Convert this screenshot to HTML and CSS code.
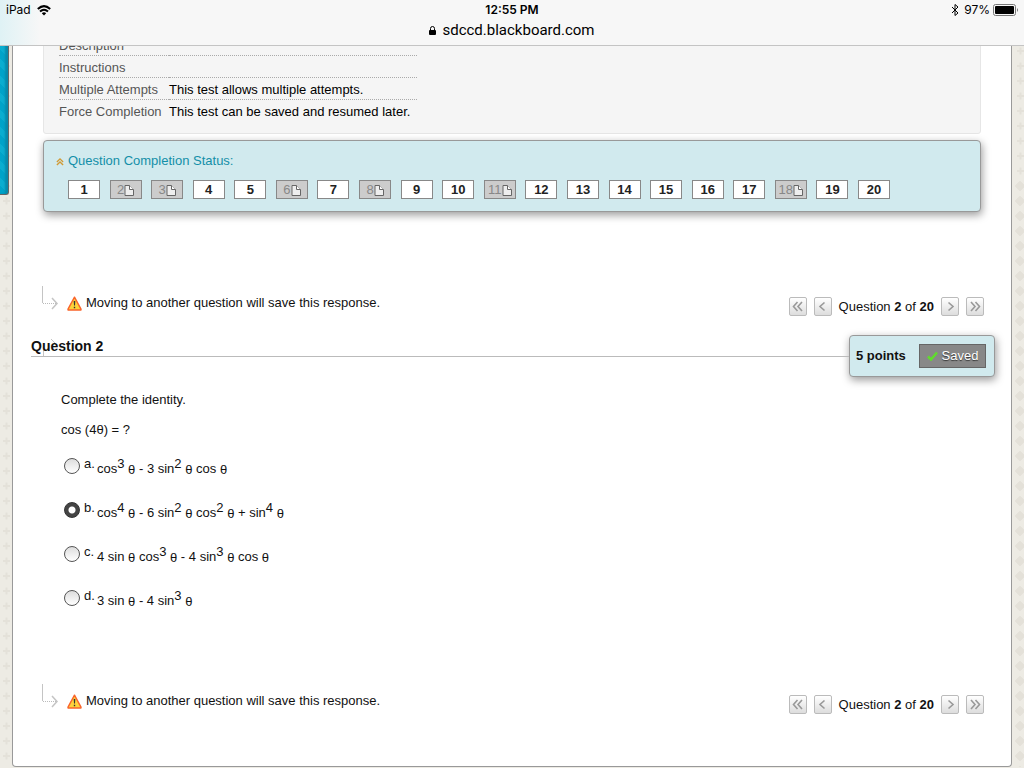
FILE: index.html
```html
<!DOCTYPE html>
<html lang="en">
    <head>
        <meta charset="utf-8">
        <title>Take Test</title>
        <meta name="viewport" content="width=device-width, initial-scale=1.0">
        <link rel="stylesheet" href="styles.css">
    </head>
    <body>
        <svg class="defs" aria-hidden="true">
            <symbol id="page-icon" viewBox="0 0 10 11"><path d="M1 .5h4.500l4 4v6H1z" fill="#eee" stroke="#666"/><path d="M5.500.5v4h4" fill="#fff" stroke="#666"/></symbol>
            <symbol id="arrow" viewBox="0 0 17 24"><path d="M.5 0v17" fill="none" stroke="#c4c4c4"/><path d="M1 17.500h13" fill="none" stroke="#bbb" stroke-dasharray="1 1"/><path d="M10 12l5 5.500-5 5.500" fill="none" stroke="#c4c4c4" stroke-width="1.500"/></symbol>
            <symbol id="warning" viewBox="0 0 15 15"><path d="M7.500 1.200L14 13.200Q14.200 14 13.500 14h-12Q.8 14 1 13.200z" fill="#fdd23a" stroke="#f9642b" stroke-width="1.400" stroke-linejoin="round"/><path d="M6.700 5h1.600l-.3 4.500h-1zM6.800 10.800h1.400v1.500H6.800z" fill="#333"/></symbol>
            <symbol id="first" viewBox="0 0 18 19"><path d="M8.500 5l-4 4.500 4 4.500M13 5L9 9.500l4 4.500" fill="none" stroke="#999" stroke-width="1.600"/></symbol>
            <symbol id="prev" viewBox="0 0 18 19"><path d="M10.500 5.500l-4.500 4 4.500 4" fill="none" stroke="#999" stroke-width="1.600"/></symbol>
            <pattern id="crosses" width="12" height="15" y="10" patternUnits="userSpaceOnUse"><path d="M3 8h7M6.500 4.500v7" stroke="#e4e1d9" stroke-width="2"/></pattern>
            <pattern id="dots" width="12" height="15" y="10" patternUnits="userSpaceOnUse"><path d="M6 4l4 4-4 4-4-4z" stroke="#e4e1d9" stroke-width="2" stroke-linejoin="round" fill="#e4e1d9"/></pattern>
        </svg>

        <header class="browser">
            <div class="status">
                <span class="left">iPad
                    <svg width="14" height="11" viewBox="0 0 14 11"><path d="M.8 4Q7-1.800 13.200 4M3 6.500q4-3.600 8 0" fill="none" stroke="#000" stroke-width="2"/><path d="M4.800 8.200q2.200-1.800 4.400 0L7 10.500z"/></svg>
                </span>
                <span class="time">12:55 PM</span>
                <span class="right">
                    <svg width="8" height="12" viewBox="0 0 8 12"><path d="M1 3l6 6-3 2.500V.5L7 3 1 9" fill="none" stroke="#000"/></svg>
                    97%
                    <svg class="battery" width="25" height="12" viewBox="0 0 25 12"><rect x=".5" y=".5" width="22" height="11" rx="2" fill="none" stroke="#777"/><rect x="2" y="2" width="19" height="8" rx="1"/><path d="M24 4q2 2 0 4z" fill="#777"/></svg>
                </span>
            </div>
            <div class="address">
                <svg width="7" height="9" viewBox="0 0 7 9"><path d="M1.500 4V2.500q0-2 2-2t2 2V4" fill="none" stroke="#000"/><rect y="4" width="7" height="5" rx="1"/></svg>
                sdccd.blackboard.com
            </div>
        </header>

        <div class="site">
            <svg class="texture texture-left" aria-hidden="true"><rect width="12" height="100%" fill="url(#crosses)"/></svg>
            <svg class="texture texture-right" aria-hidden="true"><rect width="12" height="145" fill="url(#crosses)"/><rect y="145" width="12" height="100%" fill="url(#dots)"/></svg>
            <div class="course-tab"></div>
            <main class="page">
                <table class="details">
                    <tr><th scope="row">Description</th><td></td></tr>
                    <tr><th scope="row">Instructions</th><td></td></tr>
                    <tr><th scope="row">Multiple Attempts</th><td>This test allows multiple attempts.</td></tr>
                    <tr><th scope="row">Force Completion</th><td>This test can be saved and resumed later.</td></tr>
                </table>

                <section class="completion">
                    <a class="toggle" href="#questions">
                        <svg width="8" height="9" viewBox="0 0 9 9"><path d="M1 5l3.500-3.500L8 5M1 8.500L4.500 5 8 8.500" fill="none" stroke="#d09a35" stroke-width="1.500"/></svg>
                        Question Completion Status:
                    </a>
                    <div class="questions" id="questions">
                        <button type="button">1</button>
                        <button type="button" class="saved">2<svg><use href="#page-icon"/></svg></button>
                        <button type="button" class="saved">3<svg><use href="#page-icon"/></svg></button>
                        <button type="button">4</button>
                        <button type="button">5</button>
                        <button type="button" class="saved">6<svg><use href="#page-icon"/></svg></button>
                        <button type="button">7</button>
                        <button type="button" class="saved">8<svg><use href="#page-icon"/></svg></button>
                        <button type="button">9</button>
                        <button type="button">10</button>
                        <button type="button" class="saved">11<svg><use href="#page-icon"/></svg></button>
                        <button type="button">12</button>
                        <button type="button">13</button>
                        <button type="button">14</button>
                        <button type="button">15</button>
                        <button type="button">16</button>
                        <button type="button">17</button>
                        <button type="button" class="saved">18<svg><use href="#page-icon"/></svg></button>
                        <button type="button">19</button>
                        <button type="button">20</button>
                    </div>
                </section>

                <div class="move">
                    <svg class="arrow"><use href="#arrow"/></svg>
                    <svg class="warning"><use href="#warning"/></svg>
                    <p>Moving to another question will save this response.</p>
                    <nav class="pager">
                        <button type="button" aria-label="First question"><svg><use href="#first"/></svg></button>
                        <button type="button" aria-label="Previous question"><svg><use href="#prev"/></svg></button>
                        <span>Question <b>2</b> of <b>20</b></span>
                        <button type="button" class="forward" aria-label="Next question"><svg><use href="#prev"/></svg></button>
                        <button type="button" class="forward" aria-label="Last question"><svg><use href="#first"/></svg></button>
                    </nav>
                </div>

                <form class="question">
                    <div class="question-head">
                        <svg class="branch" aria-hidden="true"><path d="M.5 12v6M8 1l4 4" fill="none" stroke="#c4c4c4"/></svg>
                        <h3>Question 2</h3>
                        <div class="points">
                            <b>5 points</b>
                            <button type="button"><svg width="11" height="10" viewBox="0 0 11 10"><path d="M1 5.500l3 3L10 1.500" fill="none" stroke="#5fdd2c" stroke-width="2.500"/></svg>Saved</button>
                        </div>
                    </div>
                    <div class="question-body">
                        <p>Complete the identity.</p>
                        <p>cos (4θ) = ?</p>
                        <div class="option">
                            <input type="radio" name="answer" id="a" value="a">
                            <label for="a"><span class="letter">a.</span><span>cos<sup>3</sup> <sub>θ</sub> - 3 sin<sup>2</sup> <sub>θ</sub> cos <sub>θ</sub></span></label>
                        </div>
                        <div class="option">
                            <input type="radio" name="answer" id="b" value="b" checked>
                            <label for="b"><span class="letter">b.</span><span>cos<sup>4</sup> <sub>θ</sub> - 6 sin<sup>2</sup> <sub>θ</sub> cos<sup>2</sup> <sub>θ</sub> + sin<sup>4</sup> <sub>θ</sub></span></label>
                        </div>
                        <div class="option">
                            <input type="radio" name="answer" id="c" value="c">
                            <label for="c"><span class="letter">c.</span><span>4 sin <sub>θ</sub> cos<sup>3</sup> <sub>θ</sub> - 4 sin<sup>3</sup> <sub>θ</sub> cos <sub>θ</sub></span></label>
                        </div>
                        <div class="option">
                            <input type="radio" name="answer" id="d" value="d">
                            <label for="d"><span class="letter">d.</span><span>3 sin <sub>θ</sub> - 4 sin<sup>3</sup> <sub>θ</sub></span></label>
                        </div>
                    </div>
                </form>

                <div class="move">
                    <svg class="arrow"><use href="#arrow"/></svg>
                    <svg class="warning"><use href="#warning"/></svg>
                    <p>Moving to another question will save this response.</p>
                    <nav class="pager">
                        <button type="button" aria-label="First question"><svg><use href="#first"/></svg></button>
                        <button type="button" aria-label="Previous question"><svg><use href="#prev"/></svg></button>
                        <span>Question <b>2</b> of <b>20</b></span>
                        <button type="button" class="forward" aria-label="Next question"><svg><use href="#prev"/></svg></button>
                        <button type="button" class="forward" aria-label="Last question"><svg><use href="#first"/></svg></button>
                    </nav>
                </div>
            </main>
        </div>
    </body>
</html>
```
FILE: styles.css
```css
* {box-sizing:border-box;}
body {margin:0;background:#edebe4;color:#111;font:13px/16px "Liberation Sans", Arial, sans-serif;}
p {margin:0;}
button {font:inherit;padding:0;border-radius:0;}
.defs {position:absolute;width:0;height:0;}

/* browser bar, page scrolls under it */
.browser {position:relative;z-index:2;height:46px;background:linear-gradient(90deg, #dff2f5, #f7f7f7 40px);border-bottom:1px solid #c4c4c4;color:#000;font-family:Inter, sans-serif;}
.status {display:grid;grid-template-columns:1fr auto 1fr;height:20px;padding:0 6px;font-size:12px;line-height:20px;}
.status span {display:flex;align-items:center;gap:6px;}
.status .right {justify-content:flex-end;gap:5px;}
.status .time {font-weight:600;}
.battery {margin-left:-2px;}
.address {display:flex;align-items:center;justify-content:center;gap:6px;font:15px/20px Roboto, sans-serif;}

.site {position:relative;margin-top:-13px;padding:0 12px;}
.texture {position:absolute;top:0;width:12px;height:100%;}
.texture-left {left:0;}
.texture-right {right:-2px;}
.course-tab {position:absolute;left:0;top:0;width:9px;height:162px;background:repeating-linear-gradient(45deg, #00a3c9 0 6px, #0aadd0 6px 12px);border:solid #666;border-width:0 1px 1px 0;border-radius:0 0 3px 0;box-shadow:inset -3px 0 2px #078bab;}
.page {position:relative;padding:0 30px 50px;background:#fff;border:1px solid #999;border-top:0;border-radius:0 0 4px 4px;}

.details {display:block;padding:0 15px 11px;background:#f5f5f5;border:1px solid #e6e6e6;border-radius:3px;border-spacing:0;}
.details th, .details td {height:22px;padding:2px 0 0;border-bottom:1px dotted #aaa;}
.details th {width:110px;text-align:left;font-weight:normal;color:#555;}
.details td {width:248px;color:#000;}
.details tr:last-child > * {border-bottom:0;}

.completion {margin-top:6px;height:72px;padding:12px;background:#d1eaee;border:1px solid #999;border-radius:4px;box-shadow:1px 3px 8px rgba(0,0,0,.4);}
.toggle {display:flex;align-items:center;gap:4px;color:#138fa8;text-decoration:none;}
.questions {display:flex;justify-content:space-between;max-width:822px;margin:11px 0 0 12px;}
.questions button {display:flex;align-items:center;justify-content:center;width:32px;height:19px;background:#fff;border:1px solid #888;color:#222;font-weight:bold;}
.questions .saved {background:#ccc;color:#888;font-weight:normal;}
.questions svg {width:10px;height:11px;margin-top:2px;}

.move {display:flex;align-items:flex-start;height:32px;margin-left:-1px;}
.completion + .move {margin-top:74px;}
.arrow {width:17px;height:24px;}
.warning {width:15px;height:15px;margin:10px 4px 0 8px;}
.move p {padding-top:9px;}
.pager {display:flex;align-items:center;gap:7px;margin:11px -3px 0 auto;}
.pager span {line-height:19px;}
.pager button {width:18px;height:19px;background:linear-gradient(#fff, #ddd);border:1px solid #bbb;border-radius:2px;}
.pager svg {display:block;width:18px;height:19px;margin:-1px;}
.pager .forward svg {transform:scaleX(-1);}

.question-head {position:relative;display:flex;align-items:flex-start;margin:17px -14px 0 -12px;}
.question-head h3 {position:relative;flex:1;height:22px;margin:0;padding-top:3px;border-bottom:1px solid #bbb;font-size:14px;line-height:16px;}
/* end of the arrow, runs behind the heading */
.branch {position:absolute;left:12px;top:3px;width:14px;height:18px;}
.points {display:flex;align-items:center;justify-content:space-between;width:146px;height:42px;padding:0 8px 0 6px;background:#d1eaee;border:1px solid #999;border-radius:4px;box-shadow:1px 3px 8px rgba(0,0,0,.4);}
.points button {display:flex;align-items:center;justify-content:center;gap:4px;width:67px;height:24px;background:#888;border:1px solid #666;color:#fff;text-shadow:0 1px 1px #333;}
.question-body {padding:15px 0 0 18px;}
.question-body p {margin-bottom:14px;}
.option {display:flex;align-items:flex-start;height:44px;}
.option input {appearance:none;width:16px;height:16px;margin:6px 4px 0 3px;background:linear-gradient(#ddd, #fff);border:1px solid #555;border-radius:50%;}
.option input:checked {background:radial-gradient(circle, #fff 3px, #444 4px);border-color:#333;}
.option label {display:flex;padding-top:4px;}
.option label span {padding-top:5px;}
.option label .letter {width:13px;padding-top:0;}
sup, sub {font-size:13px;line-height:0;}
sup {vertical-align:5px;}
sub {vertical-align:-1px;}
.question + .move {margin-top:56px;}
```
